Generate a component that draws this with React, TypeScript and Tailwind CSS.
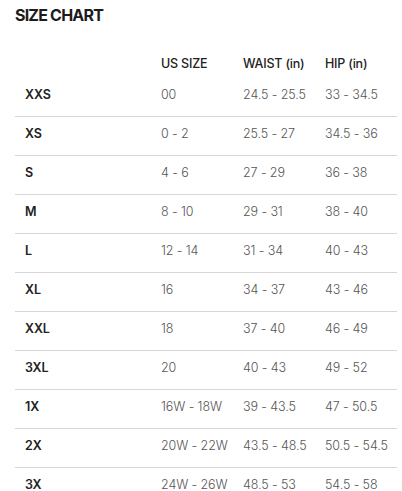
import React from "react";

const rows: [string, string, string, string][] = [
  ["XXS", "00", "24.5 - 25.5", "33 - 34.5"],
  ["XS", "0 - 2", "25.5 - 27", "34.5 - 36"],
  ["S", "4 - 6", "27 - 29", "36 - 38"],
  ["M", "8 - 10", "29 - 31", "38 - 40"],
  ["L", "12 - 14", "31 - 34", "40 - 43"],
  ["XL", "16", "34 - 37", "43 - 46"],
  ["XXL", "18", "37 - 40", "46 - 49"],
  ["3XL", "20", "40 - 43", "49 - 52"],
  ["1X", "16W - 18W", "39 - 43.5", "47 - 50.5"],
  ["2X", "20W - 22W", "43.5 - 48.5", "50.5 - 54.5"],
  ["3X", "24W - 26W", "48.5 - 53", "54.5 - 58"],
];

export default function App() {
  return (
    <div
      className="w-[402px] h-[491px] overflow-hidden bg-white px-[15px] pr-[5px]"
      style={{ fontFamily: "Inter, 'Noto Sans', sans-serif" }}
    >
      <h1 className="mt-[3px] h-[24px] text-[16px] leading-6 font-bold tracking-[-0.8px] text-[#1c1c1c]">
        SIZE CHART
      </h1>
      <div className="grid grid-cols-[136px_82px_82px_1fr] pl-[10px] pt-[29px] pb-[6px] text-[12.5px] leading-4 font-medium text-[#222] tracking-[-0.2px]">
        <div></div>
        <div>US SIZE</div>
        <div>WAIST (in)</div>
        <div>HIP (in)</div>
      </div>
      {rows.map((r) => (
        <div
          key={r[0]}
          className="grid grid-cols-[136px_82px_82px_1fr] h-[39px] pl-[10px] pt-[9px] border-b border-[#d6d6d6] text-[12.5px] leading-4 tracking-[-0.1px]"
        >
          <div className="font-semibold text-[#222]">{r[0]}</div>
          <div className="font-light text-[#555]">{r[1]}</div>
          <div className="font-light text-[#555]">{r[2]}</div>
          <div className="font-light text-[#555]">{r[3]}</div>
        </div>
      ))}
    </div>
  );
}
